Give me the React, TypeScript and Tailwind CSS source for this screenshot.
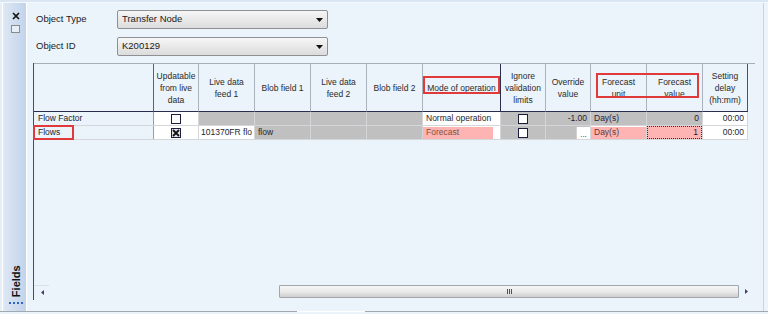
import React from 'react';

const W = [
  'w-[120px]',
  'w-[45px]',
  'w-[56px]',
  'w-[56px]',
  'w-[56px]',
  'w-[56px]',
  'w-[78px]',
  'w-[45px]',
  'w-[45px]',
  'w-[56px]',
  'w-[56px]',
  'w-[45px]',
];

const HEAD: string[][] = [
  [],
  ['Updatable', 'from live', 'data'],
  ['Live data', 'feed 1'],
  ['Blob field 1'],
  ['Live data', 'feed 2'],
  ['Blob field 2'],
  ['Mode of operation'],
  ['Ignore', 'validation', 'limits'],
  ['Override', 'value'],
  ['Forecast', 'unit'],
  ['Forecast', 'value'],
  ['Setting', 'delay', '(hh:mm)'],
];

const HEAD_BORDER = [
  'border-[#6a5a7a]',
  'border-[#aab2be]',
  'border-[#aab2be]',
  'border-[#aab2be]',
  'border-[#aab2be]',
  'border-[#aab2be]',
  'border-[#2c2c4c]',
  'border-[#aab2be]',
  'border-[#aab2be]',
  'border-[#aab2be]',
  'border-[#aab2be]',
  'border-[#5a4a6a]',
];

function Select({ value }: { value: string }) {
  return (
    <div className="w-[211px] h-[19px] border border-[#8e9094] rounded-[2px] bg-gradient-to-b from-[#f6f6f6] to-[#dcdcdc] flex items-center pl-[4px] pr-[4px]">
      <span className="flex-1 text-[9.5px] text-[#1a1a1a]">{value}</span>
      <svg width="7" height="4" viewBox="0 0 7 4">
        <path d="M0 0 L7 0 L3.5 4 Z" fill="#111" />
      </svg>
    </div>
  );
}

function Check({ checked }: { checked?: boolean }) {
  return (
    <div
      className={
        checked
          ? 'w-[10px] h-[10px] border border-[#1c1c3c] bg-[#e4e4e8] flex items-center justify-center'
          : 'w-[10px] h-[10px] border border-[#1c1c3c] bg-white'
      }
    >
      {checked && (
        <svg width="8" height="8" viewBox="0 0 8 8">
          <path d="M1 1 L7 7 M7 1 L1 7" stroke="#111" strokeWidth="1.8" />
        </svg>
      )}
    </div>
  );
}

function Sidebar() {
  return (
    <div className="w-[27px] h-full flex">
      <div className="w-[2px] h-full bg-[#e6eef8]" />
      <div className="w-[1px] h-full bg-white" />
      <div className="w-[2px] h-full bg-[#dfe8f4]" />
      <div className="w-[21px] h-full bg-gradient-to-r from-[#dbe6f4] to-[#c2d3ea] flex flex-col items-center pt-[9px]">
        <svg width="8" height="8" viewBox="0 0 8 8" className="ml-[1px]">
          <path d="M1 1 L7 7 M7 1 L1 7" stroke="#111" strokeWidth="1.7" />
        </svg>
        <div className="w-[9px] h-[8px] border border-[#8a8a8a] bg-[#e8eef6] mt-[5px]" />
        <div className="flex-1" />
        <div className="h-[36px] w-[14px] flex items-center justify-center">
          <span className="-rotate-90 text-[11px] font-bold text-[#111] whitespace-nowrap">Fields</span>
        </div>
        <div className="w-[14px] border-t-2 border-dotted border-[#2f63c8] mt-[3px] mb-[7px]" />
      </div>
      <div className="w-[1px] h-full bg-white" />
    </div>
  );
}

function HeaderRow() {
  return (
    <div className="flex border-t border-[#a6aeb8] h-[49px] w-[721px]">
      {HEAD.map((lines, i) => (
        <div
          key={i}
          className={`${W[i]} h-full border-r border-b border-b-[#2c2c4c] ${HEAD_BORDER[i]} flex flex-col items-center justify-center text-[8.5px] leading-[12px] text-[#2a2a2a] text-center`}
        >
          {lines.map((l, j) => (
            <div key={j} className="whitespace-nowrap">
              {l}
            </div>
          ))}
        </div>
      ))}
    </div>
  );
}

const cell = 'h-full border-r border-[#d4d6da] flex items-center overflow-hidden whitespace-nowrap text-[8.5px]';

function Row1() {
  return (
    <div className="flex h-[14px] border-b border-[#d4d6da] w-[714px]">
      <div className={`${W[0]} ${cell} border-r-[#9a9aaa] pl-[4px]`}>Flow Factor</div>
      <div className={`${W[1]} ${cell} bg-white justify-center`}>
        <Check />
      </div>
      <div className={`${W[2]} ${cell} bg-[#c0c0c0]`} />
      <div className={`${W[3]} ${cell} bg-[#c0c0c0]`} />
      <div className={`${W[4]} ${cell} bg-[#c0c0c0]`} />
      <div className={`${W[5]} ${cell} bg-[#c0c0c0]`} />
      <div className={`${W[6]} ${cell} bg-white pl-[3px]`}>Normal operation</div>
      <div className={`${W[7]} ${cell} bg-[#c0c0c0] justify-center`}>
        <Check />
      </div>
      <div className={`${W[8]} ${cell} bg-[#c0c0c0] justify-end pr-[3px]`}>-1.00</div>
      <div className={`${W[9]} ${cell} bg-[#c0c0c0] pl-[3px] text-[#2a1a3a]`}>Day(s)</div>
      <div className={`${W[10]} ${cell} bg-[#c0c0c0] justify-end pr-[3px]`}>0</div>
      <div className={`${W[11]} ${cell} bg-white justify-end pr-[3px]`}>00:00</div>
    </div>
  );
}

function Row2() {
  return (
    <div className="flex h-[14px] border-b border-[#d4d6da] w-[714px]">
      <div className={`${W[0]} ${cell} border-r-[#9a9aaa] pl-[4px]`}>Flows</div>
      <div className={`${W[1]} ${cell} bg-white justify-center`}>
        <Check checked />
      </div>
      <div className={`${W[2]} ${cell} bg-white pl-[2px]`}>101370FR flo</div>
      <div className={`${W[3]} ${cell} bg-[#c0c0c0] pl-[3px]`}>flow</div>
      <div className={`${W[4]} ${cell} bg-[#c0c0c0]`} />
      <div className={`${W[5]} ${cell} bg-[#c0c0c0]`} />
      <div className={`${W[6]} ${cell} bg-white`}>
        <div className="w-[70px] h-[12px] bg-[#ffb4b4] pl-[3px] flex items-center text-[#7a5238]">Forecast</div>
      </div>
      <div className={`${W[7]} ${cell} bg-[#c0c0c0] justify-center`}>
        <Check />
      </div>
      <div className={`${W[8]} ${cell} bg-[#c0c0c0] justify-end`}>
        <div className="w-[14px] h-[12px] bg-white border-l border-[#d0d0d0] flex items-end justify-center leading-[8px] text-[8px] text-[#222]">
          ...
        </div>
      </div>
      <div className={`${W[9]} ${cell} bg-white`}>
        <div className="w-full h-[12px] bg-[#ffb4b4] pl-[3px] flex items-center text-[#5a3a3a]">Day(s)</div>
      </div>
      <div className={`${W[10]} ${cell} bg-white`}>
        <div className="w-full h-full bg-[#ffb4b4] border border-dotted border-[#333] flex items-center justify-end pr-[3px] text-[#2a1a2a]">
          1
        </div>
      </div>
      <div className={`${W[11]} ${cell} bg-white justify-end pr-[3px]`}>00:00</div>
    </div>
  );
}

function Scrollbar() {
  return (
    <div className="flex h-[13px] items-center w-[720px] mb-[2px]">
      <div className="w-[15px] h-full flex items-center justify-center border-t border-[#d8e2ee]">
        <svg width="3" height="5" viewBox="0 0 3 5" className="ml-[2px]">
          <path d="M3 0 L0 2.5 L3 5 Z" fill="#4a3a6a" />
        </svg>
      </div>
      <div className="w-[230px] h-full" />
      <div className="w-[460px] h-full border border-[#a2a6ac] bg-gradient-to-b from-[#f6f6f6] via-[#eaeaea] to-[#cfcfcf] flex items-center justify-center rounded-[1px]">
        <div className="flex gap-[1px]">
          <div className="w-[1px] h-[5px] bg-[#5a4a6a]" />
          <div className="w-[1px] h-[5px] bg-[#5a4a6a]" />
          <div className="w-[1px] h-[5px] bg-[#5a4a6a]" />
        </div>
      </div>
      <div className="w-[15px] h-full flex items-center justify-center">
        <svg width="3" height="5" viewBox="0 0 3 5">
          <path d="M0 0 L3 2.5 L0 5 Z" fill="#4a3a6a" />
        </svg>
      </div>
    </div>
  );
}

function Main() {
  return (
    <div className="flex-1 h-full flex flex-col pl-[6px] pt-[7px]">
      <div className="flex items-center h-[19px] pl-[3px]">
        <div className="w-[81px] text-[9.5px] text-[#1a1a1a]">Object Type</div>
        <Select value="Transfer Node" />
      </div>
      <div className="flex items-center h-[19px] pl-[3px] mt-[8px]">
        <div className="w-[81px] text-[9.5px] text-[#1a1a1a]">Object ID</div>
        <Select value="K200129" />
      </div>
      <div className="relative mt-[7px] w-[721px] h-[237px] border-l border-[#4a4a5a] flex flex-col text-[#1e1e2e]">
        <HeaderRow />
        <Row1 />
        <Row2 />
        <div className="flex-1" />
        <Scrollbar />
        <div className="absolute left-[389px] top-[13px] w-[77px] h-[18px] border-2 border-[#e03a3a]" />
        <div className="absolute left-[562px] top-[10px] w-[103px] h-[25px] border-2 border-[#e03a3a]" />
        <div className="absolute left-[-1px] top-[62px] w-[41px] h-[15px] border-2 border-[#e03a3a]" />
      </div>
    </div>
  );
}

export default function App() {
  return (
    <div className="w-[768px] h-[314px] bg-[#ebf3fb] flex flex-col overflow-hidden font-['Liberation_Sans',Arial,sans-serif]">
      <div className="h-[3px] bg-[#dae6f4] border-b border-[#f4f8fc]" />
      <div className="flex flex-1 min-h-0">
        <Sidebar />
        <Main />
        <div className="w-[5px] h-full border-l border-[#c6d4e4] bg-[#eef4fb]" />
      </div>
      <div className="h-[3px] border-t border-[#a2a8b0] flex">
        <div className="w-[297px]" />
        <div className="w-[68px] h-[1px] bg-white -mt-[1px]" />
      </div>
    </div>
  );
}
